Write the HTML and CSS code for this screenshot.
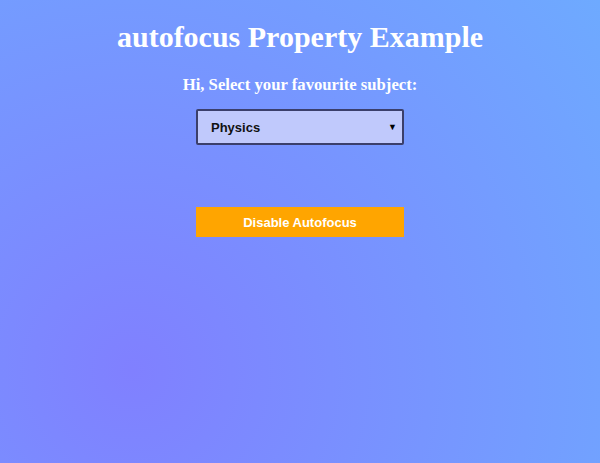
FILE: index.html
```html
<!DOCTYPE html>
<html>
<head>
<meta charset="utf-8">
<link rel="stylesheet" href="styles.css">
</head>
<body>
<main class="page">
  <h1 class="title">autofocus Property Example</h1>
  <h3 class="subtitle">Hi, Select your favourite subject:</h3>
  <div class="select-box">
    <span class="select-value">Physics</span>
    <span class="select-arrow">&#9660;</span>
  </div>
  <button class="btn">Disable Autofocus</button>
</main>
</body>
</html>
```
FILE: styles.css
```css
html, body {
  margin: 0;
  padding: 0;
  height: 100%;
}
body {
  background: radial-gradient(circle farthest-corner at 22% 80%, #8080ff 0%, #6eaaff 100%);
  font-family: "Liberation Serif", "Times New Roman", serif;
  color: #fff;
}
.page {
  display: flex;
  flex-direction: column;
  align-items: center;
  padding-top: 20px;
}
.title {
  margin: 0;
  font-size: 30px;
  font-weight: bold;
  line-height: 34px;
}
.subtitle {
  margin: 21px 0 0;
  font-size: 16.7px;
  font-weight: bold;
  line-height: 20px;
}
.select-box {
  margin-top: 14px;
  width: 208px;
  height: 36px;
  box-sizing: border-box;
  border: 2px solid #3b3f6b;
  border-radius: 2px;
  background: #c0c9fc;
  display: flex;
  align-items: center;
  justify-content: space-between;
  padding: 0 5px 0 13px;
  font-family: "Liberation Sans", Arial, sans-serif;
  font-weight: bold;
  font-size: 13px;
  color: #111;
}
.select-arrow {
  font-size: 9px;
  color: #000;
}
.btn {
  margin-top: 62px;
  width: 208px;
  height: 30px;
  border: none;
  background: #ffa500;
  color: #fff;
  font-family: "Liberation Sans", Arial, sans-serif;
  font-weight: bold;
  font-size: 13px;
  padding: 0;
}
```
